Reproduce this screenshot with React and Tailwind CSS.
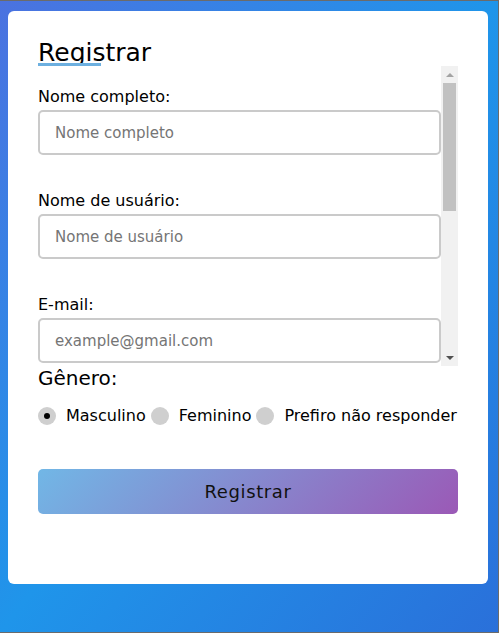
const fields = [
  { label: "Nome completo:", placeholder: "Nome completo" },
  { label: "Nome de usuário:", placeholder: "Nome de usuário" },
  { label: "E-mail:", placeholder: "example@gmail.com" },
  { label: "Telefone:", placeholder: "(00) 00000-0000" },
  { label: "Senha:", placeholder: "Senha" },
  { label: "Confirmar senha:", placeholder: "Confirmar senha" },
];

const genders = ["Masculino", "Feminino", "Prefiro não responder"];

function Radio({ checked }) {
  return (
    <span className="mr-[10px] flex h-[18px] w-[18px] shrink-0 items-center justify-center rounded-full bg-[#cfcfcf]">
      {checked && <span className="h-[6px] w-[6px] rounded-full bg-black" />}
    </span>
  );
}

// classic scrollbar look, drawn by hand since the headless one is an overlay
function FakeScrollbar() {
  return (
    <div className="flex h-full w-[17px] shrink-0 flex-col bg-[#f1f1f1]">
      <div className="flex h-[17px] items-center justify-center">
        <span className="h-0 w-0 border-x-[4px] border-b-[4px] border-x-transparent border-b-[#a3a3a3]" />
      </div>
      <div className="mx-[2px] h-[128px] bg-[#c1c1c1]" />
      <div className="flex-1" />
      <div className="flex h-[17px] items-center justify-center">
        <span className="h-0 w-0 border-x-[4px] border-t-[4px] border-x-transparent border-t-[#505050]" />
      </div>
    </div>
  );
}

export default function App() {
  return (
    <div
      className="h-[633px] w-[499px] border-y border-r border-[#6b6b6b] bg-[linear-gradient(to_bottom_right,#4b72e0,#1f95ea_50%,#2a70da)] pl-[8px] pt-[10px]"
      style={{ fontFamily: '"DejaVu Sans", Verdana, sans-serif' }}
    >
      <div className="h-[573px] w-[480px] rounded-[6px] bg-white px-[30px] pt-[27px] text-black">
        <div className="relative w-fit text-[25px] leading-[29px]">
          Registrar
          <span className="absolute bottom-[1px] left-0 h-[3px] w-[63px] bg-[#6db0e0]" />
        </div>

        <div className="-mt-px flex h-[300px] w-[420px]">
          <div className="h-full w-[403px] overflow-y-auto pt-[21px] [scrollbar-width:none]">
            {fields.map((f) => (
              <div key={f.label} className="mb-[36px]">
                <div className="mb-[4px] text-[16px] leading-[19px]">{f.label}</div>
                <input
                  type="text"
                  placeholder={f.placeholder}
                  className="h-[45px] w-full rounded-[5px] border-2 border-[#cacaca] pl-[15px] text-[15px] outline-none placeholder:text-[#757575]"
                  style={{ fontFamily: '"DejaVu Sans", Verdana, sans-serif' }}
                />
              </div>
            ))}
          </div>
          <FakeScrollbar />
        </div>

        <div className="mt-px text-[20px] leading-[23px]">Gênero:</div>
        <div className="mt-[16px] flex items-center text-[16px] leading-[19px]">
          {genders.map((g, i) => (
            <label key={g} className={`flex items-center ${i > 0 ? "ml-[5px]" : ""}`}>
              <Radio checked={i === 0} />
              <span>{g}</span>
            </label>
          ))}
        </div>

        <button
          type="button"
          className="mt-[44px] flex h-[45px] w-[420px] items-center justify-center rounded-[5px] bg-[linear-gradient(135deg,#71b7e6,#9b59b6)] text-[18px] tracking-[0.6px] text-[#111]"
          style={{ fontFamily: '"DejaVu Sans", Verdana, sans-serif' }}
        >
          Registrar
        </button>
      </div>
    </div>
  );
}
